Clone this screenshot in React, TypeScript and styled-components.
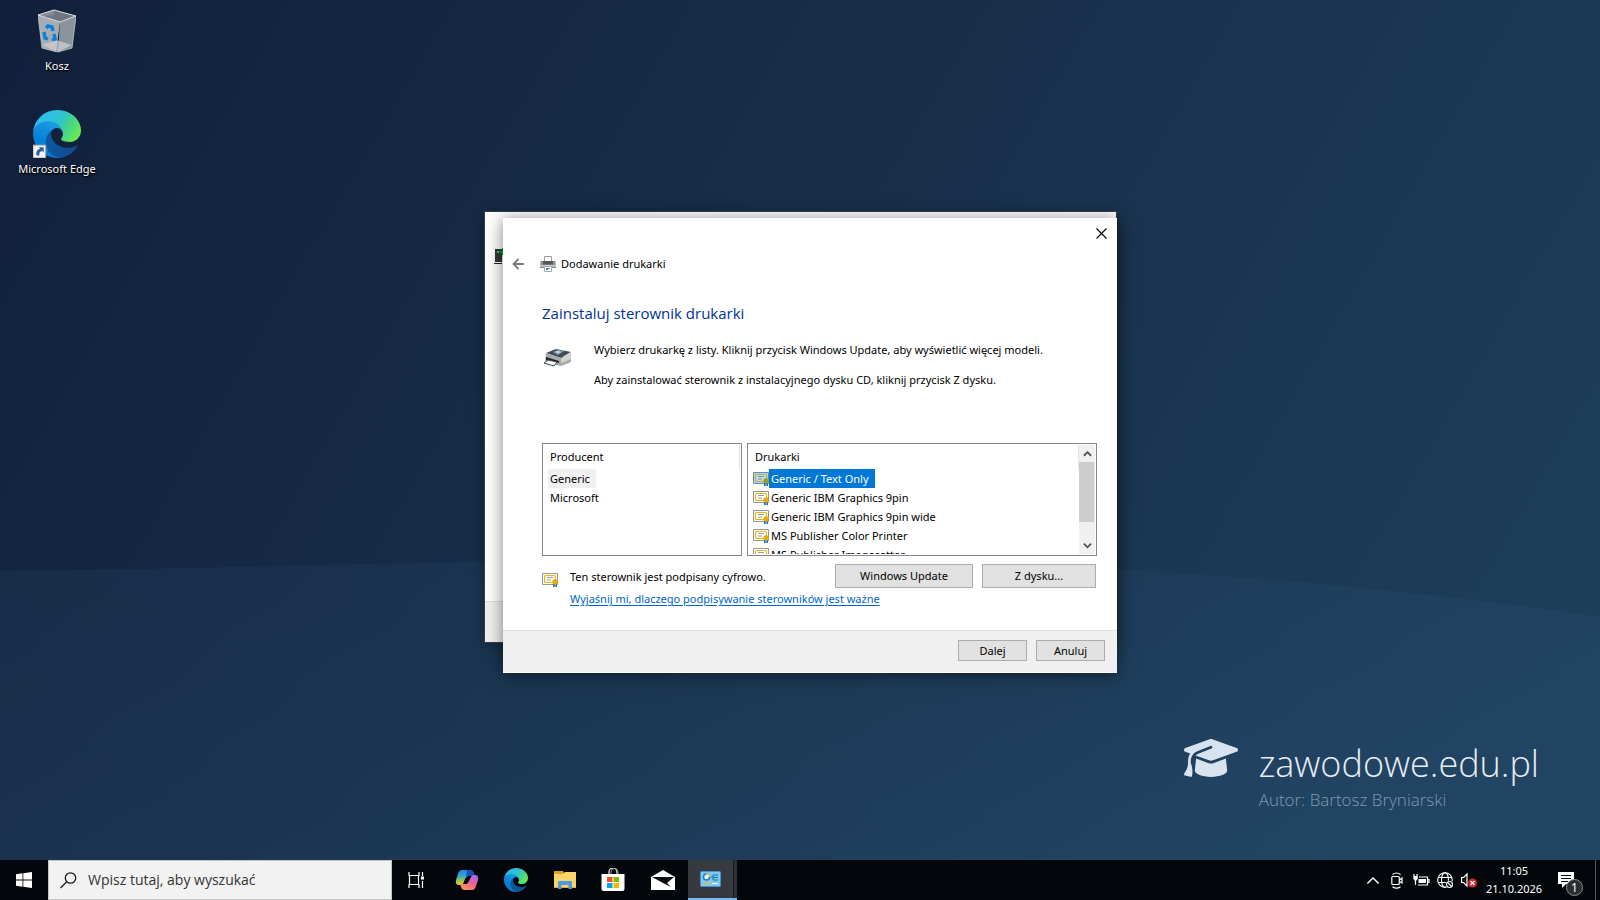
import React, { useId, useState } from "react";
import styled, { createGlobalStyle, css } from "styled-components";
import { FaGraduationCap } from "react-icons/fa6";

const GlobalStyle = createGlobalStyle`
  * { box-sizing: border-box; }
  html, body { margin: 0; padding: 0; }
  body { font-family: "Noto Sans", "Open Sans", sans-serif; font-size: 11px; overflow: hidden; }
  button, input { font: inherit; color: inherit; margin: 0; padding: 0; }
  svg { display: block; flex: none; }
`;

/* ---------- Desktop ---------- */

const Screen = styled.div`
  display: flex;
  flex-direction: column;
  height: 100vh;
`;

const Desktop = styled.main`
  position: relative;
  flex: 1;
  min-height: 0;
  overflow: hidden;
  background: linear-gradient(120deg, #11203a 0%, #172d48 40%, #1c3853 75%, #1e405c 100%);
`;

const Wave = styled.svg`
  position: absolute;
  inset: 0;
  width: 100%;
  height: 100%;
`;

const Shortcuts = styled.nav`
  position: relative;
  display: flex;
  flex-direction: column;
  width: 114px;
`;

const Shortcut = styled.a`
  display: flex;
  flex-direction: column;
  align-items: center;
  gap: 3px;
  height: 103px;
  padding-top: 7px;
  color: #fff;
  line-height: 16px;
  text-decoration: none;
  text-shadow: 1px 1px 2px #000, 0 1px 1px #000;
`;

const Brand = styled.aside`
  position: absolute;
  right: 61px;
  bottom: 48px;
  display: grid;
  grid-template-columns: 54px auto;
  column-gap: 21px;
  color: #d9e3ef;
`;

const BrandName = styled.div`
  padding-top: 9px;
  font: 300 36px/48px "Open Sans", sans-serif;
  color: #e6edf5;
`;

const BrandAuthor = styled.div`
  grid-column: 2;
  font: 300 17px/24px "Open Sans", sans-serif;
  color: #8299b1;
`;

/* ---------- Windows ---------- */

const BackWindow = styled.section`
  position: absolute;
  left: 485px;
  top: 212px;
  width: 631px;
  height: 430px;
  display: flex;
  flex-direction: column;
  justify-content: space-between;
  background: #fff;
  box-shadow: 0 0 0 1px rgba(60, 66, 76, 0.8), 0 4px 12px rgba(0, 0, 0, 0.35);
`;

const BackIcon = styled.div`
  padding: 35px 0 0 9px;
`;

const BackFooter = styled.div`
  height: 41px;
  background: #f0f0f0;
  border-top: 1px solid #dfdfdf;
`;

const Dialog = styled.section`
  position: absolute;
  left: 503px;
  top: 218px;
  width: 614px;
  display: flex;
  flex-direction: column;
  background: #fff;
  color: #000;
  box-shadow: 0 2px 16px rgba(0, 0, 0, 0.5);
`;

const CaptionBar = styled.div`
  display: flex;
  justify-content: flex-end;
  height: 30px;
`;

const FlatButton = styled.button<{ $width: number }>`
  display: flex;
  align-items: center;
  justify-content: center;
  width: ${(p) => p.$width}px;
  border: 0;
  background: transparent;
`;

const WizardBar = styled.header`
  display: flex;
  align-items: center;
  height: 31px;
  padding-left: 5px;
`;

const WizardName = styled.span`
  display: flex;
  align-items: center;
  gap: 5px;
  margin-left: 12px;
  line-height: 16px;
`;

const Body = styled.div`
  display: flex;
  flex-direction: column;
  padding: 22px 20px 12px 39px;
`;

const Heading = styled.h1`
  margin: 0;
  font: 400 15px/24px "Open Sans", sans-serif;
  color: #003399;
`;

const Intro = styled.div`
  display: flex;
  align-items: center;
  gap: 22px;
  margin: 10px 0 48px;
`;

const IntroText = styled.p`
  margin: 0;
  line-height: 30px;
`;

const IntroIcon = styled.div`
  align-self: flex-start;
  padding: 13px 0 0 1px;
`;

const Lists = styled.div`
  display: grid;
  grid-template-columns: 200px 1fr;
  gap: 5px;
`;

const ListBox = styled.div`
  display: flex;
  height: 113px;
  padding: 1px;
  border: 1px solid #828790;
`;

const ListView = styled.div`
  flex: 1;
  overflow: hidden;
`;

const ListTable = styled.table`
  width: 100%;
  border-collapse: collapse;
  line-height: 19px;

  th {
    height: 24px;
    padding: 0 6px 2px;
    border-right: 1px solid #e5e5e5;
    font-weight: 400;
    text-align: left;
  }
  td {
    height: 19px;
    padding: 0 4px;
  }
`;

const Item = styled.button<{ $state?: "active" | "inactive" }>`
  display: flex;
  align-items: center;
  height: 19px;
  border: 0;
  background: transparent;
  white-space: nowrap;

  span {
    padding: 0 6px 0 2px;
    line-height: 19px;
    ${(p) => p.$state === "active" && css`background: #0078d7; color: #fff;`}
    ${(p) => p.$state === "inactive" && css`background: #f0f0f0;`}
  }
`;

const ScrollBar = styled.div`
  display: flex;
  flex-direction: column;
  width: 16px;
  background: #f0f0f0;
`;

const ScrollArrow = styled.button`
  display: flex;
  align-items: center;
  justify-content: center;
  height: 17px;
  border: 0;
  background: transparent;
`;

const ScrollTrack = styled.div`
  flex: 1;
  padding-right: 1px;
`;

const ScrollThumb = styled.div`
  height: 60px;
  background: #cdcdcd;
`;

const Status = styled.div`
  display: flex;
  align-items: flex-start;
  gap: 12px;
  height: 54px;
  margin-top: 8px;
`;

const CertHolder = styled.div`
  padding-top: 8px;
`;

const StatusText = styled.div`
  flex: 1;
  display: flex;
  flex-direction: column;
  align-items: flex-start;
  padding-top: 2px;
  line-height: 22px;
  white-space: nowrap;

  a {
    color: #0066cc;
    text-underline-offset: 2px;
  }
`;

const Actions = styled.div`
  display: flex;
  gap: 9px;
`;

const PushButton = styled.button<{ $width: number; $tall?: boolean }>`
  width: ${(p) => p.$width}px;
  height: ${(p) => (p.$tall ? 24 : 21)}px;
  border: 1px solid #adadad;
  background: #e1e1e1;
  line-height: 18px;
`;

const StatusActions = styled(Actions)`
  margin-left: -200px;
  padding-right: 1px;
`;

const DialogFooter = styled.footer`
  display: flex;
  justify-content: flex-end;
  gap: 9px;
  height: 43px;
  padding: 9px 12px 0;
  border-top: 1px solid #dfdfdf;
  border-bottom: 1px solid #fff;
  background: #f0f0f0;
`;

/* ---------- Taskbar ---------- */

const Taskbar = styled.footer`
  display: flex;
  height: 40px;
  background: #03070b;
  color: #fff;
`;

const StartButton = styled(FlatButton)`
  height: 40px;
`;

const SearchBox = styled.label`
  display: flex;
  align-items: center;
  gap: 11px;
  width: 344px;
  padding: 0 11px;
  border: 1px solid #c3c3c3;
  background: #f2f2f2;
  color: #222;
`;

const SearchInput = styled.input`
  flex: 1;
  min-width: 0;
  border: 0;
  outline: 0;
  background: transparent;
  font: 14px/20px "Open Sans", sans-serif;

  &::placeholder {
    color: #333;
    opacity: 1;
  }
`;

const Apps = styled.div`
  display: flex;
  flex: 1;
`;

const ActiveApp = styled.div`
  display: flex;
  border-bottom: 2px solid #76b9ed;
  background: #363a3f;
`;

const AppStack = styled.div`
  width: 4px;
  border-left: 1px solid #14181c;
  background: #2c3034;
`;

const Tray = styled.div`
  display: flex;
  align-items: stretch;
`;

const Clock = styled.time`
  display: flex;
  flex-direction: column;
  justify-content: center;
  width: 66px;
  padding-bottom: 1px;
  line-height: 18px;
  text-align: center;
`;

const Notifications = styled(FlatButton)`
  position: relative;
  padding-right: 9px;
`;

const Badge = styled.span`
  position: absolute;
  left: 19px;
  top: 19px;
  width: 17px;
  height: 17px;
  border: 1px solid #8d8f91;
  border-radius: 50%;
  background: #2b2d2f;
  font-size: 12px;
  line-height: 15px;
  text-align: center;
`;

const ShowDesktop = styled.button`
  width: 5px;
  border: 0;
  border-left: 1px solid #5a5d60;
  background: transparent;
`;

/* ---------- Icons ---------- */

function BinIcon() {
  return (
    <svg width="38" height="48" viewBox="0 0 38 48">
      <path d="M0 8 22 15 18 45 4 41z" fill="#a6acb3" />
      <path d="M22 15 38 9 34 41 20 45z" fill="#8a939b" />
      <path d="M4 38 18 33 34 38 20 45z" fill="#c9cccf" opacity=".8" />
      <path d="M0 8 16 3 38 9 22 15z" fill="#6e7684" />
      <path d="M16 3v5L5 9l-4-1z" fill="#858c98" />
      <path d="M0 8 16 3 38 9 22 15z" fill="none" stroke="#dfe2e5" />
      <path d="M0 8 4 41l16 4 14-4 4-32" fill="none" stroke="#c3c8cc" strokeWidth=".8" />
      <path d="m8 21 2-2 4 1 1 4M6 25l1 6 3 1m4 1 3-1-1-5" fill="none" stroke="#0a80d8" strokeWidth="3.4" />
    </svg>
  );
}

function EdgeIcon({ size, shortcut }: { size: number; shortcut?: boolean }) {
  const id = useId().replace(/[^a-zA-Z0-9]/g, "");
  return (
    <svg width={size} height={size} viewBox="0 0 256 256">
      <defs>
        <linearGradient id={id + "a"} x1="0" x2="1"><stop stopColor="#0c59a4" /><stop offset="1" stopColor="#114a8b" /></linearGradient>
        <linearGradient id={id + "b"} x1=".7" y1=".1" x2=".3" y2="1"><stop stopColor="#1b9de2" /><stop offset=".6" stopColor="#0680d7" /><stop offset="1" stopColor="#0078d4" /></linearGradient>
        <linearGradient id={id + "c"} x1="0" x2="1" y1=".2" y2=".6"><stop stopColor="#35b9f6" /><stop offset=".5" stopColor="#2bc3d2" /><stop offset=".75" stopColor="#46d587" /><stop offset="1" stopColor="#66eb55" /></linearGradient>
      </defs>
      <g transform="translate(-4.63 -4.92)">
        <path fill={`url(#${id}a)`} d="M235.68 195.46a93.73 93.73 0 0 1-10.54 4.71 101.87 101.87 0 0 1-35.9 6.46c-47.32 0-88.54-32.55-88.54-74.32A31.48 31.48 0 0 1 117.13 105c-42.8 1.8-53.8 46.4-53.8 72.53 0 73.88 68.09 81.37 82.76 81.37 7.91 0 19.84-2.3 27-4.56l1.31-.44a128.34 128.34 0 0 0 66.6-52.8 4 4 0 0 0-5.32-5.64z" />
        <path fill={`url(#${id}b)`} d="M110.34 246.34A79.2 79.2 0 0 1 87.6 225a80.72 80.72 0 0 1 29.53-120c3.12-1.47 8.45-4.13 15.54-4a32.35 32.35 0 0 1 25.69 13 31.88 31.88 0 0 1 6.36 18.66c0-.21 24.46-79.6-80-79.6-43.9 0-80 41.66-80 78.21a130.15 130.15 0 0 0 12.11 56 128 128 0 0 0 156.38 67.11 75.55 75.55 0 0 1-62.78-8z" />
        <path fill={`url(#${id}c)`} d="M156.94 153.78c-.81 1.05-3.3 2.5-3.3 5.66 0 2.61 1.7 5.12 4.72 7.23 14.38 10 41.49 8.68 41.56 8.68a59.56 59.56 0 0 0 30.27-8.35 61.38 61.38 0 0 0 30.43-52.88c.26-22.41-8-37.31-11.34-43.91C228.09 28.76 182.35 4.92 132.61 4.92a128 128 0 0 0-128 126.2c.48-36.54 36.8-66.05 80-66.05 3.5 0 23.46.34 42 10.07 16.34 8.58 24.9 18.94 30.85 29.21 6.18 10.67 7.28 24.15 7.28 29.52s-2.74 13.33-7.8 19.91z" />
      </g>
      {shortcut && (
        <g>
          <path d="M0 187h68v69H0z" fill="#f4f4f4" stroke="#999" strokeWidth="5" />
          <path d="M19 243c-4-22 4-34 20-36l-9-9h27v28l-8-8c-13 2-17 11-15 25z" fill="#2c5ea5" />
        </g>
      )}
    </svg>
  );
}

function PrinterIcon() {
  return (
    <svg width="16" height="16" viewBox="0 0 16 16">
      <path d="M4.500.5h7v5h-7z" fill="#fff" stroke="#9c9c9c" />
      <path d="M1.500 5h13q1 0 1 1l.5 6H0l.5-6q0-1 1-1z" fill="#8d9296" />
      <path d="M3 5h10v3.500H3z" fill="#54585c" />
      <path d="M0 9h16v1.500H0z" fill="#c9cccd" />
      <path d="M4.500 10.500h7v5h-7z" fill="#fff" stroke="#a8a8a8" />
      <path d="M6 12h2v2H6z" fill="#1f86d6" /><path d="M8 12h2v1H8z" fill="#36b2a8" />
    </svg>
  );
}

function DeviceIcon() {
  return (
    <svg width="29" height="20" viewBox="0 0 29 20">
      <path d="M3 5 13 1l15 3-10 6z" fill="#434b51" />
      <path d="M3 5l15 5v8L2 15z" fill="#a4a9ac" /><path d="M18 10l10-6v10l-10 4z" fill="#d0d2d4" />
      <path d="M18 15l10-4v3l-10 4z" fill="#a9adb0" />
      <path d="M10 4l5-2 6 1-6 4z" fill="#7ea3b8" /><path d="M12 4l3-1 3 1-3 1z" fill="#c6e6f2" />
      <path d="M3 9l13 4v2L3 12z" fill="#202428" /><path d="M1 15l4-3 9 2-3 4z" fill="#fff" stroke="#3c4348" />
      <path d="M18 9h2v1h-2z" fill="#36c653" />
    </svg>
  );
}

function ServerIcon() {
  return (
    <svg width="10" height="18" viewBox="0 0 10 18">
      <path d="M1 2h7v13H1z" fill="#353a3e" /><path d="M3 4h2v2H3z" fill="#35e03b" />
      <path d="M0 16h8v1H0z" fill="#222" /><path d="M8 1h2v7H8V6H6V4h2z" fill="#13a51c" />
    </svg>
  );
}

function CertificateIcon({ selected }: { selected?: boolean }) {
  return (
    <svg width="16" height="15" viewBox="0 0 16 15">
      <path d="M.5 1.500h15v11H.500z" fill={selected ? "#b3d3ed" : "#fff"} stroke={selected ? "#6b8ba5" : "#949699"} />
      <rect x="2.500" y="3.500" width="11" height="7" rx="1" fill={selected ? "#c2dcef" : "#fffdf2"} stroke={selected ? "#b9b43c" : "#e7b80e"} strokeWidth="1.200" />
      <path d="M5 5.500h6M5 8h4" stroke={selected ? "#748fa7" : "#9b9da3"} />
      <path d="M11 11h1.800v4H11zm2.400 0h1.600v4h-1.600z" fill="#1870c5" />
      <circle cx="13" cy="10" r="2.700" fill={selected ? "#9e9a25" : "#e9ab05"} />
    </svg>
  );
}

function Chevron({ up, size = 9, color = "#505050", weight = 2 }: { up?: boolean; size?: number; color?: string; weight?: number }) {
  return (
    <svg width={size} height={size} viewBox="0 0 10 10" fill="none" stroke={color} strokeWidth={weight}>
      <path d={up ? "M1 7.500 5 3.500l4 4" : "M1 3l4 4 4-4"} />
    </svg>
  );
}

function BackArrow() {
  return (
    <svg width="13" height="12" viewBox="0 0 13 12" fill="none" stroke="#7c7c7c" strokeWidth="1.800">
      <path d="M6.500 1 1.500 6l5 5M2 6h10" />
    </svg>
  );
}

function CloseIcon() {
  return (
    <svg width="11" height="11" viewBox="0 0 11 11" stroke="#000" strokeWidth="1.100">
      <path d="m.5.5 10 10m0-10-10 10" />
    </svg>
  );
}

function WindowsLogo() {
  return (
    <svg width="16" height="16" viewBox="0 0 16 16" fill="#fff">
      <path d="M0 2.200 6.500 1.300v6.200H0zM7.300 1.200 16 0v7.500H7.300zM0 8.400h6.500v6.300L0 13.800zM7.300 8.400H16V16l-8.700-1.200z" />
    </svg>
  );
}

function SearchIcon() {
  return (
    <svg width="17" height="17" viewBox="0 0 17 17" fill="none" stroke="#1b1b1b" strokeWidth="1.300">
      <circle cx="10.500" cy="6" r="5.200" /><path d="M6.700 9.800.5 16" />
    </svg>
  );
}

function TaskViewIcon() {
  return (
    <svg width="17" height="16" viewBox="0 0 17 16" fill="none" stroke="#fff" strokeWidth="1.200">
      <path d="M1 0v3.500h10V0M1 16v-3.500h10V16M1.500 3.500v9M10.500 3.500v9M14.500 0v4M14.500 9v7" /><path d="M13 4.500h3v3h-3z" fill="#fff" stroke="none" />
    </svg>
  );
}

function CopilotIcon() {
  return (
    <svg width="24" height="22" viewBox="0 0 24 22">
      <defs>
        <linearGradient id="cpA" x1="0" x2="0" y1="0" y2="1"><stop stopColor="#1a83e8" /><stop offset=".4" stopColor="#35a8c8" /><stop offset=".75" stopColor="#a4cc3e" /><stop offset="1" stopColor="#ffc32b" /></linearGradient>
        <linearGradient id="cpB" x1=".8" x2=".2" y1="0" y2="1"><stop stopColor="#a368ee" /><stop offset=".5" stopColor="#f0628e" /><stop offset="1" stopColor="#ff9a4f" /></linearGradient>
      </defs>
      <path d="M7 1h8q2 0 3 3l1 3h-6q-2 0-3 3l-2 5q-1 1-2 1H4q-4 0-3-5l2-6q1-4 4-4z" fill="url(#cpA)" />
      <path d="M12 1h4q2 0 3 3l1 3h-7l-2 3z" fill="#174bb8" />
      <path d="M17 21H9q-2 0-3-3l-1-3h6q2 0 3-3l2-4q1-2 2-2h2q4 0 3 5l-2 6q-1 4-4 4z" fill="url(#cpB)" />
      <path d="m10 15 3-8h1.500l-3 8z" fill="#080c12" />
    </svg>
  );
}

function FolderIcon() {
  return (
    <svg width="22" height="18" viewBox="0 0 22 18">
      <path d="M0 0h9l1 2v4H0z" fill="#e0a21a" /><path d="M0 3h9l2-2h11v16H0z" fill="#fbd56b" /><path d="M0 16h22v1H0z" fill="#e6ad2c" />
      <path d="M4 11q0-1 1-1h12q1 0 1 1v7h-3.500v-4h-7v4H4z" fill="#4a9be0" />
    </svg>
  );
}

function StoreIcon() {
  return (
    <svg width="24" height="24" viewBox="0 0 24 24">
      <path d="M8 8V4a3.500 3.500 0 0 1 8 0v4" fill="none" stroke="#ddd" strokeWidth="1.300" />
      <path d="M10 7V4a3 3 0 0 1 7 0v3" fill="none" stroke="#8b8d8f" />
      <path d="M.500 6h23v15q0 2-2 2h-19q-2 0-2-2z" fill="#fff" />
      <path d="M6 9h5.500v5H6z" fill="#f25022" /><path d="M12.500 9H18v5h-5.500z" fill="#7fba00" /><path d="M6 15h5.500v5H6z" fill="#00a4ef" /><path d="M12.500 15H18v5h-5.500z" fill="#ffb900" />
    </svg>
  );
}

function MailIcon() {
  return (
    <svg width="24" height="20" viewBox="0 0 24 20">
      <path d="M0 7 12 0l12 7v13H0z" fill="#fff" /><path d="M1 7h22l-7 6 4 4-8-4z" fill="#05090d" />
    </svg>
  );
}

function PanelIcon() {
  return (
    <svg width="21" height="16" viewBox="0 0 21 16">
      <rect x=".5" y=".5" width="20" height="15" rx="1" fill="#7dc9f3" stroke="#3d96cd" />
      <circle cx="6.500" cy="6" r="3.800" fill="#1b82bd" /><path d="M6.500 6V2.200A3.800 3.800 0 0 1 10.300 6z" fill="#f5c34d" />
      <circle cx="6.500" cy="6" r="2.200" fill="#e9f7ff" />
      <path d="M11 6h2m0-2v5m0-5h5m-5 2.500h5M13 9h5" stroke="#1476ae" fill="none" />
      <path d="M3 12.500h8" stroke="#f3b53b" strokeWidth="1.500" /><path d="M12 12.500h6" stroke="#e9f7ff" />
    </svg>
  );
}

function MeetIcon() {
  return (
    <svg width="12" height="17" viewBox="0 0 12 17" fill="none" stroke="#fff" strokeWidth="1.200">
      <rect x=".8" y="4.500" width="7.500" height="8" rx="1" /><path d="m8.500 8 2.500-2v5L8.500 9.500M1.500 2.500q4-3 8 0M1.500 14.700q4 3 8 0" />
    </svg>
  );
}

function BatteryIcon() {
  return (
    <svg width="17" height="13" viewBox="0 0 17 13" fill="none" stroke="#fff" strokeWidth="1.200">
      <path d="M6 3h8.500v8H5M14.500 5.500H16v3h-1.500M1 0v2M4 0v2M2.500 6v5" /><path d="M.3 2h4.500v2.500L3.500 6.500h-2L.3 4.500z" fill="#fff" stroke="none" /><path d="M5.500 5H13v4H5.500z" fill="#fff" stroke="none" />
    </svg>
  );
}

function GlobeIcon() {
  return (
    <svg width="17" height="17" viewBox="0 0 17 17" fill="none" stroke="#fff" strokeWidth="1.100">
      <circle cx="8" cy="8" r="7.300" /><ellipse cx="8" cy="8" rx="3.500" ry="7.300" /><path d="M1 5.500h14M1 10.500h14" />
      <circle cx="12.500" cy="12.500" r="4" fill="#03070b" stroke="none" /><circle cx="12.500" cy="12.500" r="3" /><path d="m10.500 10.500 4 4" />
    </svg>
  );
}

function MutedIcon() {
  return (
    <svg width="16" height="16" viewBox="0 0 16 16">
      <path d="M.6 5.500h2L6 2v12l-3.400-3.500h-2z" fill="none" stroke="#fff" strokeWidth="1.200" />
      <circle cx="11.500" cy="11" r="4.500" fill="#dc2328" /><path d="m9.500 9 4 4m0-4-4 4" stroke="#fff" strokeWidth="1.300" />
    </svg>
  );
}

function MessageIcon() {
  return (
    <svg width="17" height="16" viewBox="0 0 17 16">
      <path d="M0 0h16v12H8l-4 4v-4H0z" fill="#fff" /><path d="M3 3.500h10M3 6.500h10M3 9.500h7" stroke="#03070b" />
    </svg>
  );
}

const manufacturers = ["Generic", "Microsoft"];
const printers = [
  "Generic / Text Only",
  "Generic IBM Graphics 9pin",
  "Generic IBM Graphics 9pin wide",
  "MS Publisher Color Printer",
  "MS Publisher Imagesetter",
];

const apps = [
  { name: "Widok zadań", icon: <TaskViewIcon />, width: 49 },
  { name: "Copilot", icon: <CopilotIcon />, width: 51 },
  { name: "Microsoft Edge", icon: <EdgeIcon size={24} />, width: 48 },
  { name: "Eksplorator plików", icon: <FolderIcon />, width: 49 },
  { name: "Microsoft Store", icon: <StoreIcon />, width: 48 },
  { name: "Poczta", icon: <MailIcon />, width: 51 },
];

const trayItems = [
  { name: "Pokaż ukryte ikony", icon: <Chevron up size={14} color="#fff" weight={1} /> },
  { name: "Kamera", icon: <MeetIcon /> },
  { name: "Bateria", icon: <BatteryIcon /> },
  { name: "Sieć", icon: <GlobeIcon /> },
  { name: "Głośnik", icon: <MutedIcon /> },
];

export default function App() {
  const [maker, setMaker] = useState(0);
  const [printer, setPrinter] = useState(0);

  return (
    <Screen>
      <GlobalStyle />
      <Desktop>
        <Wave viewBox="0 0 1600 860" preserveAspectRatio="none" aria-hidden="true">
          <defs>
            <linearGradient id="waveFill" x1="0" x2="1" y1="0" y2=".4">
              <stop stopColor="#1b3350" stopOpacity=".55" /><stop offset=".5" stopColor="#1e3c59" stopOpacity=".6" /><stop offset="1" stopColor="#234666" stopOpacity=".8" />
            </linearGradient>
          </defs>
          <path d="M0 571C500 566 1000 530 1600 617V860H0z" fill="url(#waveFill)" />
        </Wave>

        <Shortcuts aria-label="Pulpit">
          <Shortcut href="#kosz"><BinIcon />Kosz</Shortcut>
          <Shortcut href="#edge"><EdgeIcon size={48} shortcut />Microsoft Edge</Shortcut>
        </Shortcuts>

        <Brand>
          <FaGraduationCap size={54} viewBox="0 0 640 512" />
          <BrandName>zawodowe.edu.pl</BrandName>
          <BrandAuthor>Autor: Bartosz Bryniarski</BrandAuthor>
        </Brand>

        <BackWindow>
          <BackIcon><ServerIcon /></BackIcon>
          <BackFooter />
        </BackWindow>

        <Dialog role="dialog" aria-labelledby="wizard-heading">
          <CaptionBar>
            <FlatButton $width={32} aria-label="Zamknij"><CloseIcon /></FlatButton>
          </CaptionBar>
          <WizardBar>
            <FlatButton $width={20} aria-label="Wstecz"><BackArrow /></FlatButton>
            <WizardName><PrinterIcon />Dodawanie drukarki</WizardName>
          </WizardBar>
          <Body>
            <Heading id="wizard-heading">Zainstaluj sterownik drukarki</Heading>
            <Intro>
              <IntroIcon><DeviceIcon /></IntroIcon>
              <div>
                <IntroText>Wybierz drukarkę z listy. Kliknij przycisk Windows Update, aby wyświetlić więcej modeli.</IntroText>
                <IntroText>Aby zainstalować sterownik z instalacyjnego dysku CD, kliknij przycisk Z dysku.</IntroText>
              </div>
            </Intro>
            <Lists>
              <ListBox>
                <ListView>
                  <ListTable>
                    <thead><tr><th scope="col">Producent</th></tr></thead>
                    <tbody>
                      {manufacturers.map((name, i) => (
                        <tr key={name}><td>
                          <Item $state={i === maker ? "inactive" : undefined} onClick={() => setMaker(i)}><span>{name}</span></Item>
                        </td></tr>
                      ))}
                    </tbody>
                  </ListTable>
                </ListView>
              </ListBox>
              <ListBox>
                <ListView>
                  <ListTable>
                    <thead><tr><th scope="col">Drukarki</th></tr></thead>
                    <tbody>
                      {printers.map((name, i) => (
                        <tr key={name}><td>
                          <Item $state={i === printer ? "active" : undefined} onClick={() => setPrinter(i)}>
                            <CertificateIcon selected={i === printer} /><span>{name}</span>
                          </Item>
                        </td></tr>
                      ))}
                    </tbody>
                  </ListTable>
                </ListView>
                <ScrollBar>
                  <ScrollArrow aria-label="W górę"><Chevron up /></ScrollArrow>
                  <ScrollTrack><ScrollThumb /></ScrollTrack>
                  <ScrollArrow aria-label="W dół"><Chevron /></ScrollArrow>
                </ScrollBar>
              </ListBox>
            </Lists>
            <Status>
              <CertHolder><CertificateIcon /></CertHolder>
              <StatusText>
                <span>Ten sterownik jest podpisany cyfrowo.</span>
                <a href="#podpisywanie">Wyjaśnij mi, dlaczego podpisywanie sterowników jest ważne</a>
              </StatusText>
              <StatusActions>
                <PushButton $width={138} $tall>Windows Update</PushButton>
                <PushButton $width={114} $tall>Z dysku...</PushButton>
              </StatusActions>
            </Status>
          </Body>
          <DialogFooter>
            <PushButton $width={69}>Dalej</PushButton>
            <PushButton $width={69}>Anuluj</PushButton>
          </DialogFooter>
        </Dialog>
      </Desktop>

      <Taskbar>
        <StartButton $width={48} aria-label="Start"><WindowsLogo /></StartButton>
        <SearchBox>
          <SearchIcon />
          <SearchInput type="text" placeholder="Wpisz tutaj, aby wyszukać" aria-label="Wyszukaj" />
        </SearchBox>
        <Apps>
          {apps.map((a) => (
            <FlatButton key={a.name} $width={a.width} aria-label={a.name}>{a.icon}</FlatButton>
          ))}
          <ActiveApp>
            <FlatButton $width={45} aria-label="Panel sterowania"><PanelIcon /></FlatButton>
            <AppStack />
          </ActiveApp>
        </Apps>
        <Tray>
          {trayItems.map((t) => (
            <FlatButton key={t.name} $width={24} aria-label={t.name}>{t.icon}</FlatButton>
          ))}
          <Clock><span>11:05</span><span>21.10.2026</span></Clock>
          <Notifications $width={48} aria-label="Powiadomienia"><MessageIcon /><Badge>1</Badge></Notifications>
          <ShowDesktop aria-label="Pokaż pulpit" />
        </Tray>
      </Taskbar>
    </Screen>
  );
}
